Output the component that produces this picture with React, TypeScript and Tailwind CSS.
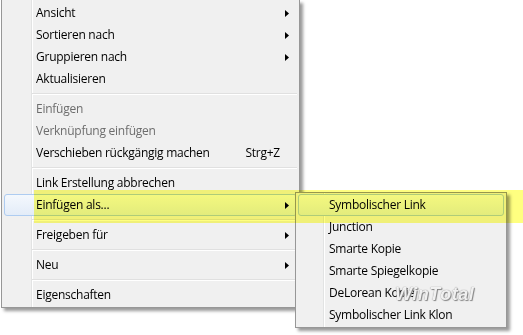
type Item =
  | { kind: 'sep' }
  | { kind: 'item'; label: string; arrow?: boolean; disabled?: boolean; shortcut?: string; hover?: boolean };

const mainItems: Item[] = [
  { kind: 'item', label: 'Ansicht', arrow: true },
  { kind: 'item', label: 'Sortieren nach', arrow: true },
  { kind: 'item', label: 'Gruppieren nach', arrow: true },
  { kind: 'item', label: 'Aktualisieren' },
  { kind: 'sep' },
  { kind: 'item', label: 'Einfügen', disabled: true },
  { kind: 'item', label: 'Verknüpfung einfügen', disabled: true },
  { kind: 'item', label: 'Verschieben rückgängig machen', shortcut: 'Strg+Z' },
  { kind: 'sep' },
  { kind: 'item', label: 'Link Erstellung abbrechen' },
  { kind: 'item', label: 'Einfügen als...', arrow: true, hover: true },
  { kind: 'sep' },
  { kind: 'item', label: 'Freigeben für', arrow: true },
  { kind: 'sep' },
  { kind: 'item', label: 'Neu', arrow: true },
  { kind: 'sep' },
  { kind: 'item', label: 'Eigenschaften' },
];

const subItems = [
  'Symbolischer Link',
  'Junction',
  'Smarte Kopie',
  'Smarte Spiegelkopie',
  'DeLorean Kopie',
  'Symbolischer Link Klon',
];

const Arrow = () => (
  <svg width="4" height="7" viewBox="0 0 4 7" className="shrink-0">
    <path d="M0 0 L4 3.5 L0 7 Z" fill="#000" />
  </svg>
);

const hoverBox =
  'rounded-[3px] border border-[#aeccf1] bg-gradient-to-b from-[#f4f8fd] to-[#e3ecf8]';

const App = () => {
  return (
    <div
      className="relative w-[523px] h-[335px] bg-white overflow-hidden text-[12px] tracking-[-0.25px] text-black"
      style={{ fontFamily: '"Segoe UI", "Open Sans", "Liberation Sans", sans-serif' }}
    >
      {/* main context menu */}
      <div className="relative ml-[1px] w-[299px] border border-t-0 border-[#979797] bg-[#f0f0f0] pt-[2px] pb-[1px] px-[2px] shadow-[3px_3px_3px_rgba(0,0,0,0.4)]">
        <div className="absolute top-0 bottom-0 left-[29px] flex">
          <div className="w-[1px] h-full bg-[#e2e3e3]" />
          <div className="w-[1px] h-full bg-white" />
        </div>
        {mainItems.map((it, i) =>
          it.kind === 'sep' ? (
            <div key={i} className="relative h-[8px] ml-[28px] pt-[3px]">
              <div className="h-[1px] bg-[#e0e0e0]" />
              <div className="h-[1px] bg-white" />
            </div>
          ) : (
            <div
              key={i}
              className={`relative flex items-center h-[22px] ${it.hover ? hoverBox + ' pl-[31px] pr-[7px]' : 'pl-[32px] pr-[8px]'} ${
                it.disabled ? 'text-[#6d6d6d]' : ''
              }`}
            >
              <span className="leading-none">{it.label}</span>
              {it.shortcut && <span className="ml-auto mr-[9px] leading-none">{it.shortcut}</span>}
              {it.arrow && (
                <span className="ml-auto flex">
                  <Arrow />
                </span>
              )}
            </div>
          ),
        )}
      </div>

      {/* submenu */}
      <div className="absolute left-[295px] top-[192px] w-[212px] border border-[#979797] bg-[#f0f0f0] py-[1px] px-[2px] shadow-[3px_3px_3px_rgba(0,0,0,0.4)]">
        <div className="absolute top-0 bottom-0 left-[27px] flex">
          <div className="w-[1px] h-full bg-[#e2e3e3]" />
          <div className="w-[1px] h-full bg-white" />
        </div>
        {subItems.map((label, i) => (
          <div
            key={label}
            className={`relative flex items-center h-[22px] ${i === 0 ? hoverBox + ' pl-[30px]' : 'pl-[31px]'}`}
          >
            <span className="leading-none">{label}</span>
          </div>
        ))}
        <div
          className="absolute left-[99px] top-[88px] italic font-bold text-[18px] tracking-[0.5px] text-white/90 [text-shadow:0_0_1px_#666,1px_1px_1px_#888] pointer-events-none"
          style={{ fontFamily: '"Liberation Sans", sans-serif' }}
        >
          WinTotal
        </div>
      </div>

      {/* highlighter mark */}
      <div className="absolute left-[34px] top-[190px] w-[489px] h-[33px] bg-[#ffff80] mix-blend-multiply pointer-events-none" />
    </div>
  );
};

export default App;
